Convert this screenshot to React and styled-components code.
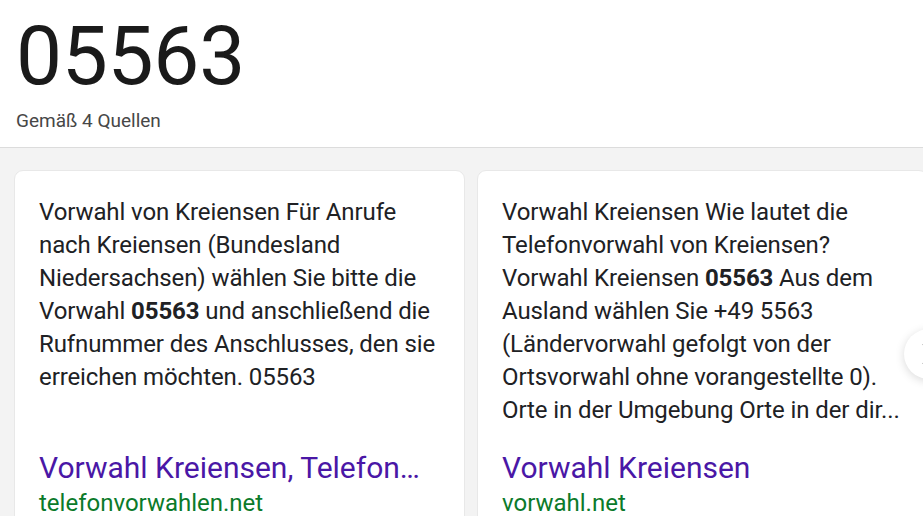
import React from 'react';
import styled, {createGlobalStyle} from 'styled-components';

const GlobalStyle = createGlobalStyle`
  html, body {
    margin: 0;
    padding: 0;
    background: #f3f3f3;
    font-family: Roboto, "Liberation Sans", Arial, sans-serif;
    overflow: hidden;
  }
`;

const sources = [
  {
    lines: [
      'Vorwahl von Kreiensen Für Anrufe',
      'nach Kreiensen (Bundesland',
      'Niedersachsen) wählen Sie bitte die',
      ['Vorwahl ', '05563', ' und anschließend die'],
      'Rufnummer des Anschlusses, den sie',
      'erreichen möchten. 05563',
    ],
    title: 'Vorwahl Kreiensen, Telefon…',
    site: 'telefonvorwahlen.net',
  },
  {
    lines: [
      'Vorwahl Kreiensen Wie lautet die',
      'Telefonvorwahl von Kreiensen?',
      ['Vorwahl Kreiensen ', '05563', ' Aus dem'],
      'Ausland wählen Sie +49 5563',
      '(Ländervorwahl gefolgt von der',
      'Ortsvorwahl ohne vorangestellte 0).',
      'Orte in der Umgebung Orte in der dir...',
    ],
    title: 'Vorwahl Kreiensen',
    site: 'vorwahl.net',
  },
];

const App = () => {
  return (
    <>
      <GlobalStyle />
      <Page>
        <Header>
          <BigNumber>05563</BigNumber>
          <SourceCount>Gemäß 4 Quellen</SourceCount>
        </Header>
        <Carousel>
          {sources.map((src, i) => (
            <Card key={i}>
              <Snippet>
                {src.lines.map((line, j) => (
                  <Line key={j}>
                    {Array.isArray(line) ? (
                      <>
                        {line[0]}
                        <b>{line[1]}</b>
                        {line[2]}
                      </>
                    ) : (
                      line
                    )}
                  </Line>
                ))}
              </Snippet>
              <LinkTitle>{src.title}</LinkTitle>
              <Site>{src.site}</Site>
            </Card>
          ))}
          <NextButton aria-label="Weiter">
            <svg width="14" height="22" viewBox="0 0 14 22">
              <path d="M1 1l10 10-10 10" fill="none" stroke="#666" strokeWidth="1.6" />
            </svg>
          </NextButton>
        </Carousel>
      </Page>
    </>
  );
};

// Styled components
const Page = styled.div`
  width: 923px;
  height: 516px;
  overflow: hidden;
`;

const Header = styled.header`
  background: #fff;
  height: 148px;
  box-sizing: border-box;
  padding: 10px 16px 0;
  border-bottom: 1px solid #dcdcdc;
`;

const BigNumber = styled.div`
  font-size: 82px;
  line-height: 92px;
  color: #1a1a1a;
  letter-spacing: -0.3px;
`;

const SourceCount = styled.div`
  margin-top: 7px;
  font-size: 19px;
  color: #474747;
`;

const Carousel = styled.div`
  position: relative;
  display: flex;
  gap: 12px;
  padding: 22px 0 0 14px;
`;

const Card = styled.div`
  flex: 0 0 451px;
  height: 360px;
  box-sizing: border-box;
  background: #fff;
  border-radius: 9px;
  border: 1px solid #e8e8e8;
  padding: 25px 24px 0 24px;
  display: flex;
  flex-direction: column;
`;

const Snippet = styled.div`
  height: 253px;
  font-size: 24px;
  line-height: 33px;
  color: #202124;
  letter-spacing: -0.1px;

  b {
    font-weight: 700;
  }
`;

const Line = styled.div`
  white-space: nowrap;
`;

const LinkTitle = styled.div`
  font-size: 30px;
  line-height: 38px;
  color: #4a17a6;
  white-space: nowrap;
`;

const Site = styled.div`
  font-size: 24px;
  line-height: 32px;
  color: #0b7a2a;
`;

const NextButton = styled.button`
  position: absolute;
  left: 904px;
  top: 181px;
  width: 50px;
  height: 50px;
  border-radius: 50%;
  background: #fff;
  border: none;
  box-shadow: 0 2px 10px rgba(0, 0, 0, 0.15);
  display: flex;
  align-items: center;
  padding: 0 0 0 18px;
`;

export default App;
